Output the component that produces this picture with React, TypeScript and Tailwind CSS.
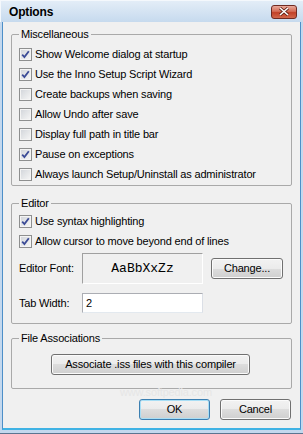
import React from 'react';

const font = "font-['Liberation_Sans','DejaVu_Sans',sans-serif]";

const CheckBox = ({ checked }: { checked: boolean }) => (
  <span className="w-[13px] h-[13px] border border-[#8e8f8f] bg-white flex items-center justify-center shrink-0">
    <span className="w-[11px] h-[11px] border border-[#f4f4f4] bg-[linear-gradient(135deg,#d4d7dc,#f4f4f4)] flex items-center justify-center">
      {checked && (
        <svg width="9" height="9" viewBox="0 0 9 9">
          <path d="M1.2 4.6 L3.4 7 L7.8 1.2" fill="none" stroke="#3b4b96" strokeWidth="1.8" />
        </svg>
      )}
    </span>
  </span>
);

const Row = ({ label, checked }: { label: string; checked: boolean }) => (
  <div className="flex items-center gap-[3px] h-[20px] pl-[7px]">
    <CheckBox checked={checked} />
    <span>{label}</span>
  </div>
);

const Button = ({ label, className = '', primary = false }: { label: string; className?: string; primary?: boolean }) => (
  <button
    className={
      'h-[21px] rounded-[3px] border text-black flex items-center justify-center bg-[linear-gradient(to_bottom,#f2f2f2_0%,#ebebeb_50%,#dddddd_50%,#cfcfcf_100%)] ' +
      (primary ? 'border-[#3c7fb1] shadow-[inset_0_0_0_1px_#a8def5] ' : 'border-[#707070] shadow-[inset_0_0_0_1px_#fbfbfb] ') +
      className
    }
  >
    {label}
  </button>
);

const Group = ({ title, className = '', children }: { title: string; className?: string; children: React.ReactNode }) => (
  <fieldset className={'border border-[#a9a9a9] rounded-[2px] ' + className}>
    <legend className="ml-[7px] px-[2px] leading-[13px]">{title}</legend>
    {children}
  </fieldset>
);

export default function App() {
  const misc = [
    { label: 'Show Welcome dialog at startup', checked: true },
    { label: 'Use the Inno Setup Script Wizard', checked: true },
    { label: 'Create backups when saving', checked: false },
    { label: 'Allow Undo after save', checked: false },
    { label: 'Display full path in title bar', checked: false },
    { label: 'Pause on exceptions', checked: true },
    { label: 'Always launch Setup/Uninstall as administrator', checked: false },
  ];

  return (
    <div className={'w-[303px] h-[434px] flex flex-col bg-[#c3d8ee] text-[11px] tracking-[-0.17px] text-black ' + font}>
      {/* title bar */}
      <div className="h-[22px] shrink-0 flex items-center justify-between pl-[8px] pr-[6px] bg-[linear-gradient(to_bottom,#e3edf7,#c6daee)] border-l border-t border-[#f4f8fc]">
        <span className="font-bold text-[12px]">Options</span>
        <span className="w-[26px] h-[14px] rounded-[3px] border border-[#6f2a22] bg-[linear-gradient(to_bottom,#e8a99c_0%,#d46b55_45%,#c24128_55%,#d2674c_100%)] flex items-center justify-center">
          <svg width="12" height="9" viewBox="0 0 12 9">
            <path d="M2 1 L10 8 M10 1 L2 8" stroke="#5a1d14" strokeWidth="3" />
            <path d="M2 1 L10 8 M10 1 L2 8" stroke="#ffffff" strokeWidth="1.6" />
          </svg>
        </span>
      </div>

      {/* client area */}
      <div className="flex-1 px-[2px] pb-[3px] border-b border-[#5b7590]">
        <div className="relative h-full bg-[#f0f0f0] border border-t-0 border-[#4d8fc8] border-b-[#3fb2e4] border-b-2 px-[8px] pt-[6px] flex flex-col">
          <Group title="Miscellaneous" className="pb-[1px]">
            <div className="pt-[3px]">
              {misc.map((m, i) => (
                <Row key={i} label={m.label} checked={m.checked} />
              ))}
            </div>
          </Group>

          <Group title="Editor" className="mt-[11px] pb-[10px]">
            <div className="pt-[1px]">
              <Row label="Use syntax highlighting" checked />
              <Row label="Allow cursor to move beyond end of lines" checked />
            </div>
            <div className="flex items-center mt-[2px] pl-[7px]">
              <span className="w-[63px]">Editor Font:</span>
              <div className="w-[121px] h-[31px] border border-[#a0a0a0] border-r-white border-b-white flex items-center justify-center font-['Liberation_Mono',monospace] text-[13px] tracking-normal">
                AaBbXxZz
              </div>
              <Button label="Change..." className="ml-[8px] w-[72px]" />
            </div>
            <div className="flex items-center mt-[9px] pl-[7px]">
              <span className="w-[63px]">Tab Width:</span>
              <div className="w-[121px] h-[20px] bg-white border border-[#abadb3] border-r-[#dbdfe6] border-b-[#e3e9ef] flex items-center pl-[3px]">
                2
              </div>
            </div>
          </Group>

          <Group title="File Associations" className="mt-[8px] pb-[13px]">
            <div className="pt-[9px] flex pl-[39px]">
              <Button label="Associate .iss files with this compiler" className="w-[199px]" />
            </div>
          </Group>

          <div className="flex justify-end gap-[10px] mt-[10px] pr-[1px]">
            <Button label="OK" primary className="w-[71px]" />
            <Button label="Cancel" className="w-[71px]" />
          </div>

          {/* watermark */}
          <span className="absolute left-[117px] top-[362px] text-[11px] text-[#e6e6e6] pointer-events-none">
            www.softpedia.com
          </span>
        </div>
      </div>
    </div>
  );
}
